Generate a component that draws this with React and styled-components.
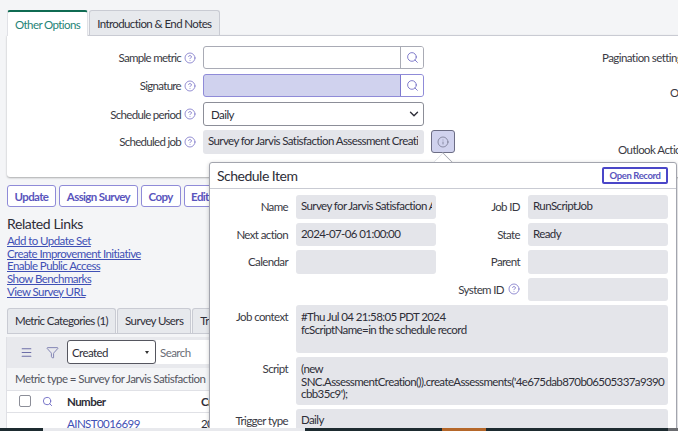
import React from 'react'
import styled, { createGlobalStyle } from 'styled-components'
import { Search, Menu, Filter, ChevronDown, Info, CircleHelp } from 'lucide-react'

const Global = createGlobalStyle`
  html, body {
    margin: 0;
    width: 678px;
    height: 431px;
    overflow: hidden;
    background: #f4f5f7;
    font-family: Lato, "Liberation Sans", sans-serif;
    font-size: 11.5px;
    letter-spacing: -0.56px;
    color: #2e2e38;
  }
  * { box-sizing: border-box; }
`

const Page = styled.div`
  position: relative;
  width: 678px;
  height: 431px;
  overflow: hidden;
  padding: 10px 0 0 7px;
`

const TabRow = styled.div`
  display: flex;
  align-items: flex-start;
  gap: 1px;
  height: 25px;
`

const Tab = styled.div`
  height: 25px;
  padding: 0 7px;
  display: flex;
  align-items: center;
  border: 1px solid #c9cbd3;
  border-bottom: none;
  border-radius: 3px 3px 0 0;
  background: #e7e9ed;
  white-space: nowrap;
  color: #2e2e38;
  letter-spacing: -0.6px;
  ${p => p.$active && `
    height: 26px;
    background: #fff;
    color: #1f8476;
    border-top: 2px solid #0f6b52;
    border-left-color: #e0e1e6;
    border-right-color: #e0e1e6;
    position: relative;
    z-index: 1;
  `}
`

const FormPanel = styled.div`
  width: 720px;
  height: 142px;
  background: #fff;
  border-top: 1px solid #c9cbd3;
  border-radius: 0 0 3px 3px;
  box-shadow: 0 1px 2px rgba(0, 0, 0, 0.3);
  display: flex;
  padding-top: 10px;
`

const FormColumn = styled.div`
  width: 595px;
  display: flex;
  flex-direction: column;
  gap: 5px;
`

const FormRow = styled.div`
  display: grid;
  grid-template-columns: 174px 22px 221px auto;
  align-items: center;
  height: 23px;
`

const Label = styled.div`
  text-align: right;
  white-space: nowrap;
  color: #3a3a44;
  letter-spacing: -0.7px;
`

const Help = styled(CircleHelp)`
  width: 12px;
  height: 12px;
  color: #7a74c8;
  margin-left: 3px;
  flex: none;
`

const LookupBox = styled.div`
  height: 23px;
  display: flex;
  border: 1px solid ${p => (p.$mandatory ? '#8f8bd8' : '#a9abb5')};
  border-radius: 3px;
  background: ${p => (p.$mandatory ? '#d0d2ee' : '#fff')};
  overflow: hidden;
`

const LookupField = styled.div`
  flex: 1;
  border-right: 1px solid ${p => (p.$mandatory ? '#7d79cf' : '#a9abb5')};
`

const LookupButton = styled.div`
  width: 22px;
  background: #fff;
  display: flex;
  align-items: center;
  justify-content: center;
  color: #6f6bc4;
`

const SelectBox = styled.div`
  height: 24px;
  border: 1px solid #8c8e98;
  border-radius: 3px;
  display: flex;
  align-items: center;
  justify-content: space-between;
  padding: 0 2px 0 7px;
  color: #2e2e38;
`

const ReadOnly = styled.div`
  height: ${p => p.$h || 23.5}px;
  background: #e4e5ea;
  border-radius: 3px;
  padding: ${p => (p.$multi ? '6px 5px' : '0 4px 0 5px')};
  display: ${p => (p.$multi ? 'block' : 'flex')};
  align-items: center;
  white-space: nowrap;
  color: #2e2e38;
  line-height: 12.7px;
  letter-spacing: -0.6px;
  min-width: 0;
`

const Clip = styled.span`
  display: block;
  overflow: hidden;
`

const InfoButton = styled.div`
  width: 24px;
  height: 23px;
  margin-left: 7px;
  background: #d0d2ee;
  border: 1px solid #6c6d85;
  border-radius: 3px;
  display: flex;
  align-items: center;
  justify-content: center;
  color: #6c6d85;
`

const SideColumn = styled.div`
  flex: 1;
`

const SideLabel = styled.div`
  height: ${p => p.$h}px;
  padding-left: ${p => p.$indent}px;
  padding-top: ${p => p.$top}px;
  white-space: nowrap;
  color: #3a3a44;
`

const Actions = styled.div`
  display: flex;
  gap: 3px;
  margin-top: 8px;
`

const ActionButton = styled.div`
  height: 22px;
  padding: 0 7px 0 6.5px;
  display: flex;
  align-items: center;
  border: 1px solid #8f8bd8;
  border-radius: 3px;
  background: #fff;
  color: #5a55bd;
  font-weight: 700;
  letter-spacing: -0.62px;
`

const LinksTitle = styled.div`
  margin-top: 8px;
  font-size: 14px;
  letter-spacing: -0.4px;
  line-height: 17px;
  color: #2e2e38;
`

const Links = styled.div`
  margin-top: 3px;
  display: flex;
  flex-direction: column;
  align-items: flex-start;
  line-height: 12.67px;
`

const RelatedLink = styled.a`
  color: #3f50b5;
  text-decoration: underline;
`

const ListArea = styled.div`
  margin-top: 9.6px;
  width: 300px;
`

const ListTabs = styled(TabRow)`
  border-bottom: 1px solid #c9cbd3;
  height: 26px;
`

const ListBody = styled.div`
  margin-top: 3px;
  box-shadow: -1px 0 0 #dfe0e5;
`

const Toolbar = styled.div`
  height: 31px;
  background: #e8e9ed;
  display: flex;
  align-items: center;
  padding-left: 13px;
  color: #6d6fa8;
`

const ToolIcon = styled.span`
  display: flex;
  flex: none;
  width: ${p => p.$w}px;
`

const FilterSelect = styled.div`
  width: 89px;
  height: 24px;
  background: #fff;
  border: 1px solid #55565f;
  border-radius: 3px;
  display: flex;
  align-items: center;
  justify-content: space-between;
  padding: 0 6px 0 4px;
  color: #2e2e38;
`

const Caret = styled.span`
  width: 0;
  height: 0;
  border: 2.5px solid transparent;
  border-top: 3px solid #333;
  margin-top: 3px;
`

const SearchInput = styled.div`
  flex: 1;
  height: 24px;
  background: #fff;
  display: flex;
  align-items: center;
  padding-left: 4px;
  color: #6a6c76;
`

const Breadcrumb = styled.div`
  height: 22px;
  display: flex;
  align-items: center;
  padding-left: 8px;
  color: #55565f;
  background: #f4f5f7;
  white-space: nowrap;
`

const ListHeader = styled.div`
  height: 23px;
  display: grid;
  grid-template-columns: 23px 25px 134px auto;
  align-items: center;
  background: #fff;
  padding-left: 12px;
  font-weight: 700;
  border-top: 1px solid #e0e1e6;
  border-bottom: 1px solid #e0e1e6;
`

const Checkbox = styled.span`
  width: 12px;
  height: 12px;
  border: 1px solid #8c8e98;
  border-radius: 2px;
`

const HeaderSearch = styled(Search)`
  color: #6f6bc4;
`

const ListRow = styled.div`
  height: 16px;
  background: #fff;
  padding: 4px 0 0 60px;
  color: #3f50b5;
  display: grid;
  grid-template-columns: 134px auto;
`

const Plain = styled.span`
  color: #2e2e38;
`

const Popover = styled.div`
  position: absolute;
  left: 209px;
  top: 162px;
  width: 468px;
  height: 275px;
  background: #fff;
  border: 1px solid #a3a5ae;
  border-radius: 3px 3px 0 0;
  box-shadow: 0 1px 4px rgba(0, 0, 0, 0.2);
`

const Arrow = styled.span`
  position: absolute;
  left: 226px;
  top: -8px;
  width: 14px;
  height: 14px;
  background: #fff;
  border-left: 1px solid #dfe0e5;
  border-top: 1px solid #a3a5ae;
  transform: rotate(45deg);
  clip-path: polygon(0 0, 100% 0, 0 100%);
`

const PopHeader = styled.div`
  height: 26px;
  padding: 0 8px 0 7px;
  display: flex;
  align-items: center;
  justify-content: space-between;
  border-bottom: 1px solid #c9cbd3;
  font-size: 14px;
  letter-spacing: -0.5px;
`

const OpenRecord = styled.div`
  width: 66px;
  height: 17px;
  border: 2px solid #4a46c8;
  border-radius: 2px;
  display: flex;
  align-items: center;
  justify-content: center;
  color: #5a55bd;
  font-size: 9.5px;
  letter-spacing: -0.4px;
  font-weight: 700;
`

const PopBody = styled.div`
  padding: 6px 8px 0 0;
  display: flex;
  flex-direction: column;
  gap: 4px;
`

const PopGrid = styled.div`
  display: grid;
  grid-template-columns: 78px 140px 76px 140px;
  grid-auto-rows: 23.5px;
  row-gap: 4px;
  column-gap: 8px;
  align-items: center;
`

const PopRow = styled.div`
  display: grid;
  grid-template-columns: 78px minmax(0, 1fr);
  column-gap: 8px;
`

const PopLabel = styled.div`
  display: flex;
  justify-content: flex-end;
  align-items: center;
  gap: 1px;
  white-space: nowrap;
  color: #3a3a44;
  letter-spacing: -0.62px;
  padding-top: ${p => p.$top || 0}px;
  height: ${p => (p.$top ? 'auto' : '100%')};
  align-self: start;
`

const Bottom = styled.div`
  position: absolute;
  left: 0;
  right: 0;
  bottom: 0;
  height: 3px;
  display: grid;
  grid-template-columns: 43px 262px 137px 44px 182px 10px;
`

const BottomPart = styled.div`
  background: ${p => p.$c};
`

const help = <Help strokeWidth={1.6} />

const lookup = mandatory => (
  <LookupBox $mandatory={mandatory}>
    <LookupField $mandatory={mandatory} />
    <LookupButton><Search size={13} strokeWidth={1.6} /></LookupButton>
  </LookupBox>
)

export default function App() {
  return (
    <Page>
      <Global />
      <TabRow>
        <Tab $active>Other Options</Tab>
        <Tab>Introduction &amp; End Notes</Tab>
      </TabRow>
      <FormPanel>
        <FormColumn>
          <FormRow><Label>Sample metric</Label>{help}{lookup(false)}</FormRow>
          <FormRow><Label>Signature</Label>{help}{lookup(true)}</FormRow>
          <FormRow>
            <Label>Schedule period</Label>{help}
            <SelectBox>Daily<ChevronDown size={14} strokeWidth={2.4} /></SelectBox>
          </FormRow>
          <FormRow>
            <Label>Scheduled job</Label>{help}
            <ReadOnly><Clip>Survey for Jarvis Satisfaction Assessment Creati</Clip></ReadOnly>
            <InfoButton><Info size={12} strokeWidth={1.4} /></InfoButton>
          </FormRow>
        </FormColumn>
        <SideColumn>
          <SideLabel $h={35} $indent={0} $top={5}>Pagination settings</SideLabel>
          <SideLabel $h={62} $indent={68} $top={5}>Outlook</SideLabel>
          <SideLabel $h={20} $indent={16} $top={0}>Outlook Actionable</SideLabel>
        </SideColumn>
      </FormPanel>

      <Actions>
        <ActionButton>Update</ActionButton>
        <ActionButton>Assign Survey</ActionButton>
        <ActionButton>Copy</ActionButton>
        <ActionButton>Edit</ActionButton>
      </Actions>

      <LinksTitle>Related Links</LinksTitle>
      <Links>
        <RelatedLink>Add to Update Set</RelatedLink>
        <RelatedLink>Create Improvement Initiative</RelatedLink>
        <RelatedLink>Enable Public Access</RelatedLink>
        <RelatedLink>Show Benchmarks</RelatedLink>
        <RelatedLink>View Survey URL</RelatedLink>
      </Links>

      <ListArea>
        <ListTabs>
          <Tab>Metric Categories (1)</Tab>
          <Tab>Survey Users</Tab>
          <Tab>Triggers</Tab>
        </ListTabs>
        <ListBody>
          <Toolbar>
            <ToolIcon $w={26}><Menu size={13} /></ToolIcon>
            <ToolIcon $w={21}><Filter size={13} strokeWidth={1.5} /></ToolIcon>
            <FilterSelect>Created<Caret /></FilterSelect>
            <SearchInput>Search</SearchInput>
          </Toolbar>
          <Breadcrumb>Metric type = Survey for Jarvis Satisfaction</Breadcrumb>
          <ListHeader>
            <Checkbox />
            <HeaderSearch size={11} />
            <span>Number</span>
            <span>Created</span>
          </ListHeader>
          <ListRow>AINST0016699<Plain>2024</Plain></ListRow>
        </ListBody>
      </ListArea>

      <Popover>
        <Arrow />
        <PopHeader>Schedule Item<OpenRecord>Open Record</OpenRecord></PopHeader>
        <PopBody>
          <PopGrid>
            <PopLabel>Name</PopLabel>
            <ReadOnly><Clip>Survey for Jarvis Satisfaction Assessment</Clip></ReadOnly>
            <PopLabel>Job ID</PopLabel>
            <ReadOnly>RunScriptJob</ReadOnly>
            <PopLabel>Next action</PopLabel>
            <ReadOnly>2024-07-06 01:00:00</ReadOnly>
            <PopLabel>State</PopLabel>
            <ReadOnly>Ready</ReadOnly>
            <PopLabel>Calendar</PopLabel>
            <ReadOnly />
            <PopLabel>Parent</PopLabel>
            <ReadOnly />
            <span />
            <span />
            <PopLabel>System ID {help}</PopLabel>
            <ReadOnly />
          </PopGrid>
          <PopRow>
            <PopLabel $top={5}>Job context</PopLabel>
            <ReadOnly $multi $h={48}>#Thu Jul 04 21:58:05 PDT 2024<br />fcScriptName=in the schedule record</ReadOnly>
          </PopRow>
          <PopRow>
            <PopLabel $top={5}>Script</PopLabel>
            <ReadOnly $multi $h={48}>(new<br />SNC.AssessmentCreation()).createAssessments('4e675dab870b06505337a9390<br />cbb35c9');</ReadOnly>
          </PopRow>
          <PopRow>
            <PopLabel $top={5}>Trigger type</PopLabel>
            <ReadOnly>Daily</ReadOnly>
          </PopRow>
        </PopBody>
      </Popover>

      <Bottom>
        <BottomPart $c="#1d2b30" />
        <BottomPart $c="#e8e9ed" />
        <BottomPart $c="#1d2b30" />
        <BottomPart $c="#b5672a" />
        <BottomPart $c="#1d2b30" />
        <BottomPart $c="#6a6c70" />
      </Bottom>
    </Page>
  )
}
